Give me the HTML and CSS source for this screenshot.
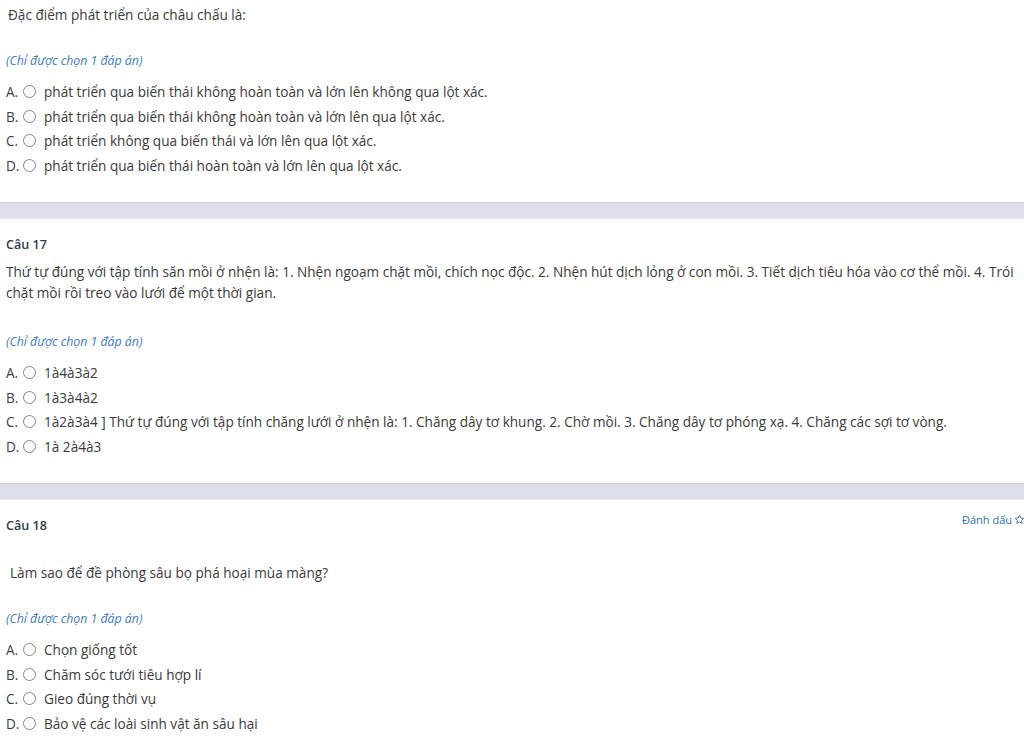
FILE: index.html
```html
<!DOCTYPE html>
<html lang="vi">
<head>
<meta charset="utf-8">
<title>Câu hỏi</title>
<link rel="stylesheet" href="styles.css">
</head>
<body>
<section class="question">
  <p class="q-text q-text--first">Đặc điểm phát triển của châu chấu là:</p>
  <p class="note">(Chỉ được chọn 1 đáp án)</p>
  <ul class="options">
    <li class="opt"><span class="lbl">A.</span><span class="radio"></span><span class="opt-text">phát triển qua biến thái không hoàn toàn và lớn lên không qua lột xác.</span></li>
    <li class="opt"><span class="lbl">B.</span><span class="radio"></span><span class="opt-text">phát triển qua biến thái không hoàn toàn và lớn lên qua lột xác.</span></li>
    <li class="opt"><span class="lbl">C.</span><span class="radio"></span><span class="opt-text">phát triển không qua biến thái và lớn lên qua lột xác.</span></li>
    <li class="opt"><span class="lbl">D.</span><span class="radio"></span><span class="opt-text">phát triển qua biến thái hoàn toàn và lớn lên qua lột xác.</span></li>
  </ul>
</section>
<div class="divider"></div>
<section class="question">
  <div class="q-head"><h3 class="q-num">Câu 17</h3></div>
  <p class="q-text q-text--long">Thứ tự đúng với tập tính săn mồi ở nhện là: 1. Nhện ngoạm chặt mồi, chích nọc độc. 2. Nhện hút dịch lỏng ở con mồi. 3. Tiết dịch tiêu hóa vào cơ thể mồi. 4. Trói chặt mồi rồi treo vào lưới để một thời gian.</p>
  <p class="note">(Chỉ được chọn 1 đáp án)</p>
  <ul class="options">
    <li class="opt"><span class="lbl">A.</span><span class="radio"></span><span class="opt-text">1à4à3à2</span></li>
    <li class="opt"><span class="lbl">B.</span><span class="radio"></span><span class="opt-text">1à3à4à2</span></li>
    <li class="opt"><span class="lbl">C.</span><span class="radio"></span><span class="opt-text">1à2à3à4 ] Thứ tự đúng với tập tính chăng lưới ở nhện là: 1. Chăng dây tơ khung. 2. Chờ mồi. 3. Chăng dây tơ phóng xạ. 4. Chăng các sợi tơ vòng.</span></li>
    <li class="opt"><span class="lbl">D.</span><span class="radio"></span><span class="opt-text">1à 2à4à3</span></li>
  </ul>
</section>
<div class="divider"></div>
<section class="question">
  <div class="q-head">
    <h3 class="q-num">Câu 18</h3>
    <a class="mark">Đánh dấu <svg class="star" width="11" height="11" viewBox="0 0 24 24"><path d="M12 2.5l2.9 6.1 6.6.8-4.9 4.6 1.3 6.5L12 17.3l-5.9 3.2 1.3-6.5-4.9-4.6 6.6-.8z" fill="none" stroke="currentColor" stroke-width="2" stroke-linejoin="round"/></svg></a>
  </div>
  <p class="q-text q-text--indent">Làm sao để đề phòng sâu bọ phá hoại mùa màng?</p>
  <p class="note">(Chỉ được chọn 1 đáp án)</p>
  <ul class="options">
    <li class="opt"><span class="lbl">A.</span><span class="radio"></span><span class="opt-text">Chọn giống tốt</span></li>
    <li class="opt"><span class="lbl">B.</span><span class="radio"></span><span class="opt-text">Chăm sóc tưới tiêu hợp lí</span></li>
    <li class="opt"><span class="lbl">C.</span><span class="radio"></span><span class="opt-text">Gieo đúng thời vụ</span></li>
    <li class="opt"><span class="lbl">D.</span><span class="radio"></span><span class="opt-text">Bảo vệ các loài sinh vật ăn sâu hại</span></li>
  </ul>
</section>
</body>
</html>
```

FILE: styles.css
```css
html, body {
  margin: 0;
  padding: 0;
  background: #ffffff;
}
body {
  font-family: "Open Sans", "Noto Sans", sans-serif;
  font-size: 13.6px;
  color: #3a3a3a;
  overflow: hidden;
}
.question {
  padding: 17px 8px 24px 6px;
}
.question:first-child {
  padding-top: 4px;
}
.q-head {
  display: flex;
  justify-content: space-between;
  align-items: flex-start;
  height: 18px;
}
.q-num {
  margin: 0;
  font-size: 12.6px;
  font-weight: 600;
  line-height: 18px;
  color: #2f3d4c;
}
.mark {
  margin-top: -5px;
  margin-right: -9px;
  font-size: 11px;
  line-height: 16px;
  color: #2d6fb6;
  display: flex;
  align-items: center;
  gap: 2px;
  white-space: nowrap;
}
.star {
  display: block;
  color: #4a6f96;
}
.q-text {
  margin: 7.5px 0 27.5px 0;
  line-height: 21px;
}
.q-text--first {
  margin-top: 0;
  padding-left: 2px;
}
.q-text--long {
  margin-bottom: 30.5px;
}
.q-text--indent {
  margin-top: 27.5px;
  padding-left: 4px;
}
.note {
  margin: 0 0 11px 0;
  font-size: 12.3px;
  line-height: 16px;
  font-style: italic;
  color: #3f7cc0;
}
.options {
  list-style: none;
  margin: 0;
  padding: 0;
}
.opt {
  display: flex;
  align-items: center;
  height: 24.5px;
  white-space: nowrap;
}
.lbl {
  width: 17px;
  color: #3c3c3c;
}
.radio {
  box-sizing: border-box;
  width: 13px;
  height: 13px;
  border: 1px solid #858585;
  border-radius: 50%;
  margin-right: 8px;
  flex: none;
}
.opt-text {
  color: #3a3a3a;
}
.divider {
  height: 15px;
  background: #dde0ea;
  border-top: 1px solid #cdd1db;
  border-bottom: 1px solid #e3e6ee;
}
```
